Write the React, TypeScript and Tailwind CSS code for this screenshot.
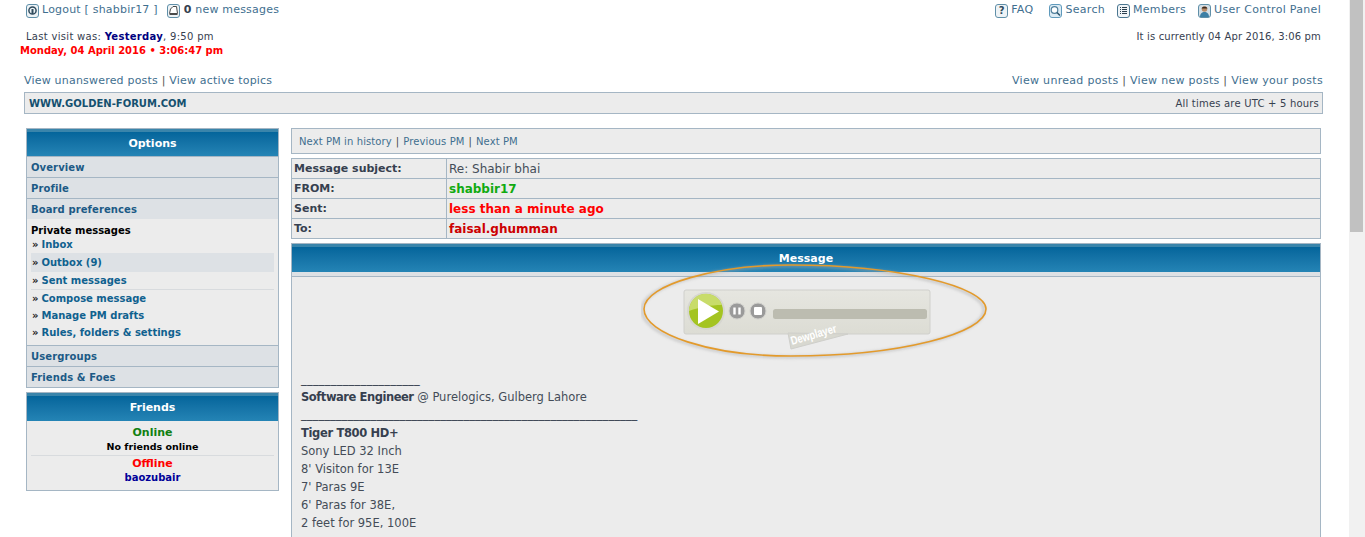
const font = { fontFamily: '"DejaVu Sans", Verdana, sans-serif' };

const linkBlue = "text-[#3f6f8f]";

function LogoutIcon() {
  return (
    <svg width="13" height="14" viewBox="0 0 13 14" fill="none">
      <rect x="0.5" y="0.5" width="12" height="13" rx="2.5" fill="#eef3f6" stroke="#5f8fa8" />
      <circle cx="6.5" cy="6.5" r="3.6" stroke="#2f4a5c" strokeWidth="1.500" />
      <path d="M6.500 5v5" stroke="#2f4a5c" strokeWidth="2" />
    </svg>
  );
}

function MessageIcon() {
  return (
    <svg width="13" height="14" viewBox="0 0 13 14" fill="none">
      <rect x="0.5" y="0.5" width="12" height="13" rx="2.5" fill="#eef3f6" stroke="#5f8fa8" />
      <path d="M2.500 9.500L3.500 5l2.500-2.500h3.500l1 7z" fill="#fff" stroke="#4a4a4a" />
      <path d="M2.500 10.500h8" stroke="#4a4a4a" />
    </svg>
  );
}

function FaqIcon() {
  return (
    <div className="flex h-[14px] w-[13px] items-center justify-center rounded-[3px] border border-[#5f8fa8] bg-[#eef3f6] text-[10px] font-bold leading-none text-[#2f4a5c]">
      ?
    </div>
  );
}

function SearchIcon() {
  return (
    <svg width="13" height="14" viewBox="0 0 13 14" fill="none">
      <rect x="0.5" y="0.5" width="12" height="13" rx="2.5" fill="#dcebf4" stroke="#5f9abc" />
      <circle cx="5.500" cy="6" r="3.300" fill="#fff" stroke="#4f7f9c" strokeWidth="1.200" />
      <path d="M8 8.500l3 3" stroke="#2f566e" strokeWidth="1.600" />
    </svg>
  );
}

function MembersIcon() {
  return (
    <svg width="13" height="14" viewBox="0 0 13 14" fill="none">
      <rect x="0.5" y="0.5" width="12" height="13" rx="2.5" fill="#f1f5f8" stroke="#4a7690" />
      <path d="M3 3.500h1M5 3.500h5M3 5.500h1M5 5.500h5M3 7.500h1M5 7.500h5M3 9.500h1M5 9.500h5" stroke="#2a3f4e" />
    </svg>
  );
}

function UcpIcon() {
  return (
    <svg width="13" height="14" viewBox="0 0 13 14" fill="none">
      <rect x="0.5" y="0.5" width="12" height="13" rx="2.5" fill="#d4dfe6" stroke="#5f8fa8" />
      <circle cx="6.500" cy="5" r="2.800" fill="#b98a66" />
      <path d="M3.700 4.500c0-2.500 5.600-2.500 5.600 0z" fill="#3a2a20" />
      <path d="M2 13c0-3.500 2-5 4.500-5s4.500 1.500 4.500 5z" fill="#3d7fa5" />
    </svg>
  );
}

function NavLink({ icon, label }: { icon: React.ReactNode; label: string }) {
  return (
    <div className="flex items-center gap-[3px]">
      {icon}
      <span>{label}</span>
    </div>
  );
}

function PanelHeader({ title, className }: { title: string; className?: string }) {
  return (
    <div
      className={`flex items-center justify-center border-t-[3px] border-[#3a85ab] bg-gradient-to-b from-[#04659b] to-[#2484b5] font-bold text-white ${className ?? ""}`}
    >
      {title}
    </div>
  );
}

function SideRow({ label }: { label: string }) {
  return (
    <div className="flex h-[21px] items-center border-b border-[#a5b6c4] bg-[#dde1e5] pl-[4px] text-[10px] font-bold tracking-[0.1px] text-[#1c5a86] last:h-[20px] last:border-b-0">
      {label}
    </div>
  );
}

function PmLink({ label, className }: { label: string; className?: string }) {
  return (
    <div className={`flex items-center pl-[1px] text-[10px] font-bold text-[#10618f] ${className ?? "h-[18px]"}`}>
      <span className="mr-[3px] text-[#222]">»</span>
      {label}
    </div>
  );
}

function Sidebar() {
  return (
    <div className="flex w-[253px] shrink-0 flex-col gap-[4px]">
      <div className="border border-[#a5b6c4] bg-[#ececec]">
        <PanelHeader title="Options" className="h-[27px] text-[11px]" />
        <div className="border-t border-[#a5b6c4]">
          <SideRow label="Overview" />
          <SideRow label="Profile" />
          <SideRow label="Board preferences" />
        </div>
        <div className="flex h-[126px] flex-col px-[4px] pt-[5px]">
          <div className="h-[11px] text-[10px] font-bold leading-[14px] text-black">Private messages</div>
          <PmLink label="Inbox" />
          <PmLink label="Outbox (9)" className="h-[19px] bg-[#dde1e5]" />
          <PmLink label="Sent messages" className="h-[18px] border-b border-[#d8dbde]" />
          <PmLink label="Compose message" className="h-[17px]" />
          <PmLink label="Manage PM drafts" className="h-[17px]" />
          <PmLink label="Rules, folders & settings" className="h-[17px]" />
        </div>
        <div className="border-t border-[#a5b6c4]">
          <SideRow label="Usergroups" />
          <SideRow label="Friends & Foes" />
        </div>
      </div>
      <div className="border border-[#a5b6c4] bg-[#ececec]">
        <PanelHeader title="Friends" className="h-[28px] pb-[1px] text-[11px]" />
        <div className="flex h-[69px] flex-col items-center px-[4px] pt-[5px] font-bold">
          <div className="text-[11px] leading-[14px] text-[#118011]">Online</div>
          <div className="text-[9.500px] leading-[14px] text-black">No friends online</div>
          <div className="mb-[1px] mt-[1px] w-full border-t border-[#d8dbde]" />
          <div className="text-[11px] leading-[14px] text-[#ff0000]">Offline</div>
          <div className="text-[10px] leading-[14px] text-[#000099]">baozubair</div>
        </div>
      </div>
    </div>
  );
}

function PmRow({ label, children, last }: { label: string; children: React.ReactNode; last?: boolean }) {
  return (
    <div className={`flex ${last ? "h-[19px]" : "h-[20px] border-b border-[#a5b6c4]"}`}>
      <div className="flex w-[155px] shrink-0 items-center border-r border-[#a5b6c4] pl-[2px] pt-[1px] text-[11px] font-bold text-[#36404f]">
        {label}
      </div>
      <div className="flex items-center pl-[2px] text-[12px]">{children}</div>
    </div>
  );
}

function Player() {
  return (
    <svg width="360" height="100" viewBox="0 0 360 100" fill="none" className="block">
      <defs>
        <linearGradient id="box" x1="0" y1="0" x2="0" y2="1">
          <stop offset="0" stopColor="#e6e6e0" />
          <stop offset="1" stopColor="#dcdcd4" />
        </linearGradient>
        <filter id="soft" x="-10%" y="-20%" width="120%" height="140%">
          <feGaussianBlur stdDeviation="1.500" />
        </filter>
      </defs>
      <path
        d="M3 47C3 22 78 3 150 3c108 0 195 22 195 44 0 24-85 47-195 47C70 94 3 72 3 47z"
        stroke="#aaaaaa"
        strokeWidth="2.500"
        opacity="0.600"
        filter="url(#soft)"
        transform="translate(-2 1)"
      />
      <path
        d="M3 47C3 22 78 3 150 3c108 0 195 22 195 44 0 24-85 47-195 47C70 94 3 72 3 47z"
        stroke="#e39a2b"
        strokeWidth="1.600"
      />
      <rect x="43" y="28" width="246" height="44" rx="2" fill="url(#box)" stroke="#d0d0cc" />
      <path d="M147 71l3 16 57-15z" fill="#d8d8d0" stroke="#cfcfcb" />
      <text
        x="151"
        y="83"
        transform="rotate(-16 151 83)"
        fill="#fff"
        fontSize="12"
        fontWeight="bold"
        fontFamily='"Liberation Sans", sans-serif'
        textLength="47"
        lengthAdjust="spacingAndGlyphs"
      >
        Dewplayer
      </text>
      <g transform="translate(-1 2)">
        <circle cx="66" cy="47" r="19" fill="#d6d6d0" />
        <circle cx="66" cy="47" r="17" fill="#a4c421" />
        <path d="M49 47a17 17 0 0 1 33-6c-12 0-22 2-33 6z" fill="#c8dc6a" />
        <path d="M58 35v25l21-12.500z" fill="#fff" />
        <circle cx="97" cy="47" r="8" fill="#9a9a9a" stroke="#d0d0cc" />
        <path d="M94.500 43.500v7M99.500 43.500v7" stroke="#fff" strokeWidth="2.400" />
        <circle cx="118" cy="47" r="8" fill="#9a9a9a" stroke="#d0d0cc" />
        <rect x="114" y="43" width="8" height="8" rx="1" fill="#fff" />
        <rect x="133" y="45" width="154" height="10" rx="2.500" fill="#bcbcb0" />
      </g>
    </svg>
  );
}

function MainColumn() {
  return (
    <div className="flex w-[1030px] shrink-0 flex-col">
      <div className={`flex h-[26px] items-center border border-[#a5b6c4] bg-[#ececec] pl-[7px] text-[10px] tracking-[0.1px] ${linkBlue}`}>
        Next PM in history <span className="mx-[4px] text-[#444]">|</span> Previous PM{" "}
        <span className="mx-[4px] text-[#444]">|</span> Next PM
      </div>
      <div className="mt-[4px] border border-[#a5b6c4] bg-[#ececec]">
        <PmRow label="Message subject:">
          <span className="text-[#444c58]">Re: Shabir bhai</span>
        </PmRow>
        <PmRow label="FROM:">
          <span className="font-bold text-[#11aa11]">shabbir17</span>
        </PmRow>
        <PmRow label="Sent:">
          <span className="font-bold text-[#ff0000]">less than a minute ago</span>
        </PmRow>
        <PmRow label="To:" last>
          <span className="font-bold text-[#cc0000]">faisal.ghumman</span>
        </PmRow>
      </div>
      <div className="mt-[4px] h-[300px] border border-b-0 border-[#a5b6c4] bg-[#ececec]">
        <PanelHeader title="Message" className="h-[28px] pb-[1px] text-[11px]" />
        <div className="h-[5px] border-b border-[#a5b6c4] bg-[#dde1e5]" />
        <div className="relative z-10 -mt-[15px] ml-[349px]">
          <Player />
        </div>
        <div className="mt-[8px] pl-[9px] text-[11.500px] leading-[18px] text-[#444c58]">
          <div className="h-[18px] tracking-[0.2px] text-[#36404f]">____________________</div>
          <div>
            <span className="font-bold tracking-[-0.45px] text-[#36404f]">Software Engineer</span> @ Purelogics, Gulberg Lahore
          </div>
          <div className="h-[18px] leading-[16px] tracking-[0.05px] text-[#36404f]">__________________________________________________________</div>
          <div className="font-bold tracking-[-0.35px] text-[#36404f]">Tiger T800 HD+</div>
          <div>Sony LED 32 Inch</div>
          <div>8' Visiton for 13E</div>
          <div>7' Paras 9E</div>
          <div>6' Paras for 38E,</div>
          <div>2 feet for 95E, 100E</div>
        </div>
      </div>
    </div>
  );
}

export default function App() {
  return (
    <div className="flex h-[537px] overflow-hidden bg-white" style={font}>
      <div className="min-w-0 flex-1">
        <div className={`flex h-[19px] items-center justify-between pl-[26px] pr-[28px] pt-[2px] text-[11px] tracking-[0.2px] ${linkBlue}`}>
          <div className="flex items-center">
            <LogoutIcon />
            <span className="ml-[3px]">Logout [ shabbir17 ]</span>
            <span className="ml-[9px]"><MessageIcon /></span>
            <span className="ml-[4px]"><b className="text-[#36404f]">0</b> new messages</span>
          </div>
          <div className="flex items-center tracking-[0.3px]">
            <NavLink icon={<FaqIcon />} label="FAQ" />
            <div className="ml-[16px]"><NavLink icon={<SearchIcon />} label="Search" /></div>
            <div className="ml-[12px]"><NavLink icon={<MembersIcon />} label="Members" /></div>
            <div className="ml-[12px]"><NavLink icon={<UcpIcon />} label="User Control Panel" /></div>
          </div>
        </div>
        <div className="mt-[11px] flex justify-between pl-[26px] pr-[28px] text-[10px] leading-[14px] text-[#36404f]">
          <div className="tracking-[0.3px]">
            Last visit was: <b className="text-[#000080]">Yesterday</b>, 9:50 pm
          </div>
          <div className="tracking-[0.15px]">It is currently 04 Apr 2016, 3:06 pm</div>
        </div>
        <div className="pl-[20px] text-[10px] font-bold leading-[14px] text-[#ff0000]">
          Monday, 04 April 2016 • 3:06:47 pm
        </div>
        <div className={`mt-[15px] flex justify-between pl-[24px] pr-[26px] text-[11px] leading-[16px] ${linkBlue}`}>
          <div className="tracking-[0.2px]">
            View unanswered posts <span className="text-[#555]">|</span> View active topics
          </div>
          <div className="tracking-[0.3px]">
            View unread posts <span className="text-[#555]">|</span> View new posts{" "}
            <span className="text-[#555]">|</span> View your posts
          </div>
        </div>
        <div className="ml-[24px] mr-[26px] mt-[3px] flex h-[22px] items-center justify-between border border-[#a5b6c4] bg-[#ececec] pl-[4px] pr-[3px] text-[10px]">
          <b className="text-[#14506f]">WWW.GOLDEN-FORUM.COM</b>
          <span className="tracking-[0.2px] text-[#36404f]">All times are UTC + 5 hours</span>
        </div>
        <div className="mt-[14px] flex gap-[12px] pl-[26px]">
          <Sidebar />
          <MainColumn />
        </div>
      </div>
      <div className="w-[16px] shrink-0 bg-[#f1f1f1] pl-[1px] pr-[2px]">
        <div className="h-[232px] bg-[#c1c1c1]" />
      </div>
    </div>
  );
}
